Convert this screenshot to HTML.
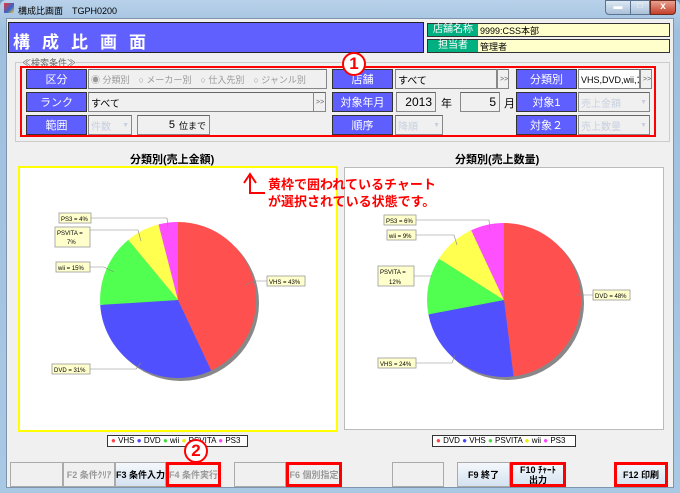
<!DOCTYPE html>
<html><head><meta charset="utf-8"><style>
*{box-sizing:border-box;margin:0;padding:0}
body{width:680px;height:493px;overflow:hidden;font-family:"Liberation Sans","Noto Sans CJK JP",sans-serif;background:#6f9cc0;position:relative}
.a{position:absolute}
.frame{left:0;top:0;width:680px;height:493px;background:linear-gradient(#b9d1ea,#9ec0de 30px,#a9c8e4);border-radius:6px 6px 0 0}
.client{left:6px;top:18px;width:668px;height:470px;background:#f0f0f0;border:1px solid #7e95ab}
.lbl{position:absolute;background:#5f5fff;color:#fff;font-size:11px;text-align:center;border:1px solid #333;display:flex;align-items:center;justify-content:center}
.fld{position:absolute;background:#f0f0f0;border:1px solid #888;border-top-color:#666;font-size:10px;display:flex;align-items:center;padding-left:2px}
.dis{color:#c8d0e0}
.btn{position:absolute;top:462px;height:25px;background:#f0f0f0;border:1px solid #aaa;font-size:9px;font-weight:bold;display:flex;align-items:center;justify-content:center;text-align:center;line-height:10px}
.red{outline:3px solid #f00;outline-offset:-3px}
.lb{font-size:6px;fill:#000}
</style></head><body>
<div class="a frame"></div>
<div class="a" style="left:4px;top:3px;width:10px;height:10px;background:linear-gradient(135deg,#e33,#36c 60%,#fc3)"></div>
<div class="a" style="left:18px;top:4px;font-size:9px;color:#000">構成比画面　TGPH0200</div>
<div class="a" style="left:605px;top:0;width:26px;height:15px;background:linear-gradient(#dde8f3,#aac0d8);border:1px solid #5a7390;border-radius:0 0 0 4px;font-size:9px;text-align:center;color:#fff">▬</div>
<div class="a" style="left:630px;top:0;width:20px;height:15px;background:linear-gradient(#dde8f3,#aac0d8);border:1px solid #5a7390;font-size:8px;text-align:center;color:#fff">□</div>
<div class="a" style="left:650px;top:0;width:26px;height:15px;background:linear-gradient(#e8a090,#c4402a);border:1px solid #6a2a20;border-radius:0 0 4px 0;font-size:10px;font-weight:bold;text-align:center;color:#fff">x</div>
<div class="a client"></div>

<div class="a" style="left:8px;top:22px;width:416px;height:31px;background:#6060ff;border:1px solid #222;color:#fff;font-size:17px;font-weight:bold;letter-spacing:12px;padding:5px 0 0 4px">構成比画面</div>
<div class="a" style="left:427px;top:23px;width:243px;height:14px;background:#ffffcc;border:1px solid #333"></div>
<div class="a" style="left:428px;top:24px;width:50px;height:12px;background:#00b080;color:#fff;font-size:10px;text-align:center;line-height:12px">店舗名称</div>
<div class="a" style="left:480px;top:24px;font-size:9px">9999:CSS本部</div>
<div class="a" style="left:427px;top:39px;width:243px;height:14px;background:#ffffcc;border:1px solid #333"></div>
<div class="a" style="left:428px;top:40px;width:50px;height:12px;background:#00b080;color:#fff;font-size:10px;text-align:center;line-height:12px">担当者</div>
<div class="a" style="left:480px;top:40px;font-size:9px">管理者</div>

<div class="a" style="left:15px;top:62px;width:655px;height:80px;border:1px solid #ccc"></div>
<div class="a" style="left:22px;top:56px;font-size:9px;color:#666;background:#f0f0f0">≪検索条件≫</div>
<div class="a" style="left:20px;top:66px;width:636px;height:71px;border:2px solid #f00"></div>

<div class="lbl" style="left:26px;top:69px;width:61px;height:20px">区分</div>
<div class="fld" style="left:88px;top:69px;width:239px;height:20px;color:#999;font-size:9px">◉ 分類別　○ メーカー別　○ 仕入先別　○ ジャンル別</div>
<div class="lbl" style="left:332px;top:69px;width:61px;height:20px">店舗</div>
<div class="fld" style="left:395px;top:69px;width:102px;height:20px">すべて</div>
<div class="fld" style="left:497px;top:69px;width:12px;height:20px;font-size:7px;color:#666">&gt;&gt;</div>
<div class="lbl" style="left:516px;top:69px;width:61px;height:20px">分類別</div>
<div class="fld" style="left:578px;top:69px;width:62px;height:20px;background:#fff;font-size:9px;overflow:hidden;white-space:nowrap">VHS,DVD,wii,ﾌﾟ</div>
<div class="fld" style="left:640px;top:69px;width:12px;height:20px;font-size:7px;color:#666">&gt;&gt;</div>

<div class="lbl" style="left:26px;top:92px;width:61px;height:20px">ランク</div>
<div class="fld" style="left:88px;top:92px;width:238px;height:20px">すべて</div>
<div class="fld" style="left:313px;top:92px;width:13px;height:20px;font-size:7px;color:#666">&gt;&gt;</div>
<div class="lbl" style="left:332px;top:92px;width:61px;height:20px">対象年月</div>
<div class="fld" style="left:396px;top:92px;width:40px;height:20px;justify-content:flex-end;padding-right:3px;font-size:12px">2013</div>
<div class="a" style="left:441px;top:95px;font-size:11px">年</div>
<div class="fld" style="left:460px;top:92px;width:40px;height:20px;justify-content:flex-end;padding-right:3px;font-size:12px">5</div>
<div class="a" style="left:504px;top:95px;font-size:11px">月</div>
<div class="lbl" style="left:516px;top:92px;width:61px;height:20px">対象1</div>
<div class="fld dis" style="left:578px;top:92px;width:72px;height:20px">売上金額 <span style="margin-left:auto;margin-right:2px;font-size:7px">▼</span></div>

<div class="lbl" style="left:26px;top:115px;width:61px;height:20px">範囲</div>
<div class="fld dis" style="left:88px;top:115px;width:44px;height:20px">件数 <span style="margin-left:auto;margin-right:2px;font-size:7px">▼</span></div>
<div class="fld" style="left:137px;top:115px;width:73px;height:20px;font-size:11px;justify-content:flex-end;padding-right:3px">5 <span style="font-size:9px;margin-left:4px">位まで</span></div>
<div class="lbl" style="left:332px;top:115px;width:61px;height:20px">順序</div>
<div class="fld dis" style="left:395px;top:115px;width:48px;height:20px">降順 <span style="margin-left:auto;margin-right:2px;font-size:7px">▼</span></div>
<div class="lbl" style="left:516px;top:115px;width:61px;height:20px">対象２</div>
<div class="fld dis" style="left:578px;top:115px;width:72px;height:20px">売上数量 <span style="margin-left:auto;margin-right:2px;font-size:7px">▼</span></div>

<div class="a" style="left:342px;top:52px;width:24px;height:24px;border-radius:50%;background:#fff;border:2px solid #f00;color:#f00;font-size:17px;font-weight:bold;text-align:center;line-height:20px">1</div>

<div class="a" style="left:130px;top:151px;font-size:11px;font-weight:bold">分類別(売上金額)</div>
<div class="a" style="left:455px;top:151px;font-size:11px;font-weight:bold">分類別(売上数量)</div>
<div class="a" style="left:18px;top:166px;width:320px;height:266px;background:#fff;border:2px solid #ff0"></div>
<div class="a" style="left:344px;top:167px;width:320px;height:263px;background:#fff;border:1px solid #bbb"></div>

<svg class="a" style="left:0;top:0" width="680" height="493">
<circle cx="181" cy="303" r="78" fill="#888"/>
<path d="M178 300L178 222A78 78 0 0 1 211.2 370.6Z" fill="#ff5050"/>
<path d="M178 300L211.2 370.6A78 78 0 0 1 100.2 304.9Z" fill="#5050ff"/>
<path d="M178 300L100.2 304.9A78 78 0 0 1 128.3 239.9Z" fill="#50ff50"/>
<path d="M178 300L128.3 239.9A78 78 0 0 1 158.6 224.4Z" fill="#ffff50"/>
<path d="M178 300L158.6 224.4A78 78 0 0 1 178 222Z" fill="#ff50ff"/>
<circle cx="507" cy="303" r="77" fill="#888"/>
<path d="M504 300L504 223A77 77 0 0 1 513.6 376.4Z" fill="#ff5050"/>
<path d="M504 300L513.6 376.4A77 77 0 0 1 428.4 314.4Z" fill="#5050ff"/>
<path d="M504 300L428.4 314.4A77 77 0 0 1 439 258.7Z" fill="#50ff50"/>
<path d="M504 300L439 258.7A77 77 0 0 1 471.2 230.3Z" fill="#ffff50"/>
<path d="M504 300L471.2 230.3A77 77 0 0 1 504 223Z" fill="#ff50ff"/>
<g stroke="#888" stroke-width="0.6" fill="none">
<path d="M91 218H167L168 228"/><path d="M90 230H138L141 241"/><path d="M90 267H104L114 272"/><path d="M267 281H255L245 285"/><path d="M90 369H136L141 363"/>
<path d="M416 220H489L490 230"/><path d="M416 235H454L457 245"/><path d="M414 276H432"/><path d="M593 295H575"/><path d="M416 363H452L455 355"/>
</g>
<g fill="#ffffcc" stroke="#999" stroke-width="0.8">
<rect x="59" y="213" width="32" height="10"/><rect x="55" y="227" width="35" height="20"/><rect x="56" y="262" width="34" height="10"/><rect x="267" y="276" width="38" height="10"/><rect x="52" y="364" width="38" height="10"/>
<rect x="384" y="215" width="32" height="10"/><rect x="387" y="230" width="29" height="10"/><rect x="378" y="266" width="36" height="20"/><rect x="593" y="290" width="37" height="10"/><rect x="378" y="358" width="38" height="10"/>
</g>
<g class="lb" font-family="Liberation Sans,sans-serif" font-size="6">
<text x="61" y="221">PS3 = 4%</text><text x="57" y="235">PSVITA =</text><text x="67" y="244">7%</text><text x="58" y="270">wii = 15%</text><text x="269" y="284">VHS = 43%</text><text x="54" y="372">DVD = 31%</text>
<text x="386" y="223">PS3 = 6%</text><text x="389" y="238">wii = 9%</text><text x="380" y="274">PSVITA =</text><text x="389" y="284">12%</text><text x="595" y="298">DVD = 48%</text><text x="380" y="366">VHS = 24%</text>
</g>
<path d="M250 193V175M244 183L250 174L256 183" stroke="#f00" stroke-width="2" fill="none"/>
<path d="M249 193H265" stroke="#f00" stroke-width="2"/>
</svg>
<div class="a" style="left:268px;top:176px;font-size:13px;font-weight:bold;color:#f00;line-height:17px">黄枠で囲われているチャート<br>が選択されている状態です。</div>

<div class="a" style="left:107px;top:435px;width:141px;height:12px;background:#fff;border:1px solid #333;font-size:8px;line-height:10px;padding-left:3px;white-space:nowrap"><span style="color:#f44">●</span> VHS <span style="color:#44f">●</span> DVD <span style="color:#4d4">●</span> wii <span style="color:#ee0">●</span> PSVITA <span style="color:#f4f">●</span> PS3</div>
<div class="a" style="left:432px;top:435px;width:144px;height:12px;background:#fff;border:1px solid #333;font-size:8px;line-height:10px;padding-left:3px;white-space:nowrap"><span style="color:#f44">●</span> DVD <span style="color:#44f">●</span> VHS <span style="color:#4d4">●</span> PSVITA <span style="color:#ee0">●</span> wii <span style="color:#f4f">●</span> PS3</div>

<div class="btn" style="left:10px;width:53px"></div>
<div class="btn" style="left:63px;width:52px;color:#999">F2 条件ｸﾘｱ</div>
<div class="btn" style="left:115px;width:51px;background:linear-gradient(#f4f8fc,#d4e2f0)">F3 条件入力</div>
<div class="btn red" style="left:166px;width:55px;color:#999">F4 条件実行</div>
<div class="btn" style="left:234px;width:52px"></div>
<div class="btn red" style="left:286px;width:56px;color:#999">F6 個別指定</div>
<div class="btn" style="left:392px;width:52px"></div>
<div class="btn" style="left:457px;width:53px;background:linear-gradient(#f4f8fc,#d4e2f0)">F9 終了</div>
<div class="btn red" style="left:510px;width:56px;background:linear-gradient(#f4f8fc,#d4e2f0)">F10 ﾁｬｰﾄ<br>出力</div>
<div class="btn red" style="left:614px;width:54px;background:linear-gradient(#f4f8fc,#d4e2f0)">F12 印刷</div>
<div class="a" style="left:184px;top:439px;width:24px;height:24px;border-radius:50%;background:#fff;border:2px solid #f00;color:#f00;font-size:17px;font-weight:bold;text-align:center;line-height:20px">2</div>
</body></html>
